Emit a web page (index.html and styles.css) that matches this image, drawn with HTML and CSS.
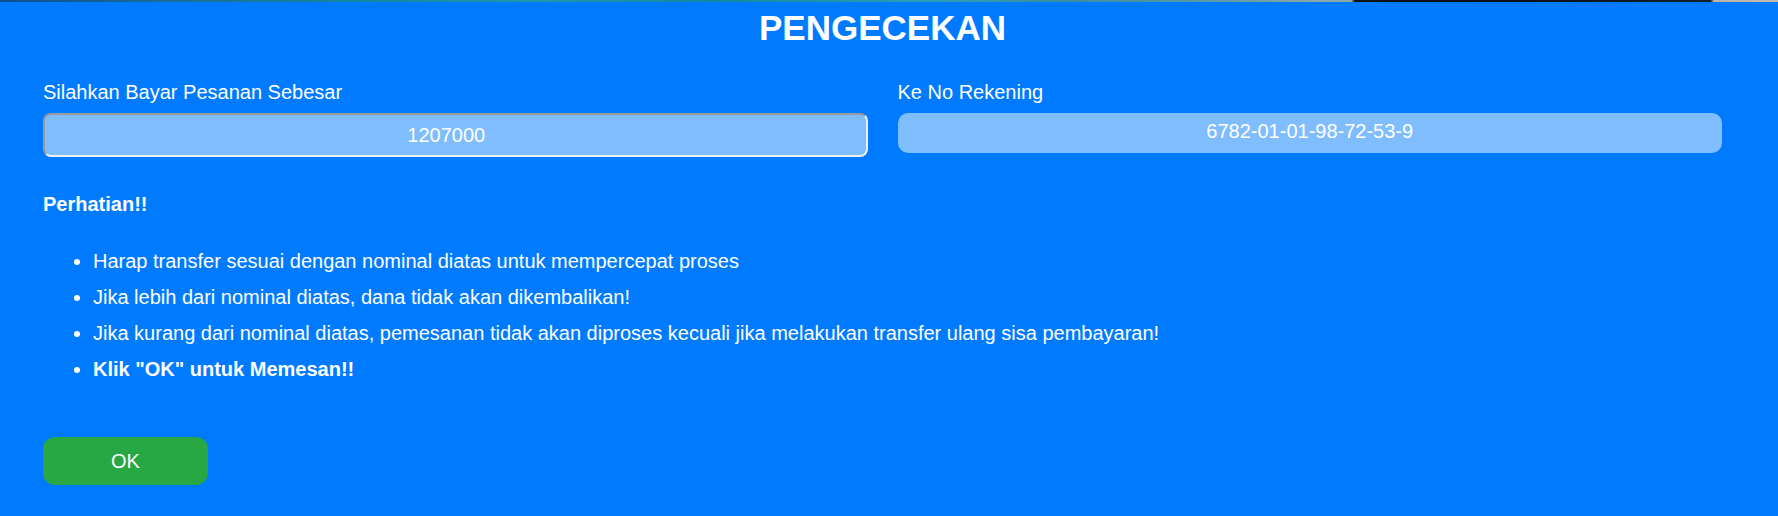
FILE: index.html
```html
<!DOCTYPE html>
<html lang="id">
<head>
<meta charset="utf-8">
<title>Pengecekan</title>
<link rel="stylesheet" href="styles.css">
</head>
<body>
<div class="strip"></div>
<main class="panel">
  <h1 class="title">PENGECEKAN</h1>
  <div class="fields">
    <div class="field">
      <label class="label" for="nominal">Silahkan Bayar Pesanan Sebesar</label>
      <input id="nominal" class="amount" type="text" value="1207000" readonly>
    </div>
    <div class="field">
      <label class="label" for="rekening">Ke No Rekening</label>
      <div id="rekening" class="account">6782-01-01-98-72-53-9</div>
    </div>
  </div>
  <p class="notice">Perhatian!!</p>
  <ul class="rules">
    <li>Harap transfer sesuai dengan nominal diatas untuk mempercepat proses</li>
    <li>Jika lebih dari nominal diatas, dana tidak akan dikembalikan!</li>
    <li>Jika kurang dari nominal diatas, pemesanan tidak akan diproses kecuali jika melakukan transfer ulang sisa pembayaran!</li>
    <li class="strong">Klik "OK" untuk Memesan!!</li>
  </ul>
  <button class="ok" type="button">OK</button>
</main>
</body>
</html>
```
FILE: styles.css
```css
html, body {
  margin: 0;
  padding: 0;
}
body {
  background: #007bff;
  color: #fff;
  font-family: "Liberation Sans", Arial, sans-serif;
  font-size: 20px;
  line-height: 30px;
  height: 516px;
  overflow: hidden;
}
.strip {
  height: 2px;
  background: linear-gradient(90deg, #0d4f86 0%, #1a6f9a 10%, #13869b 20%, #1d9aa8 30%, #1686a0 40%, #2a9fb0 52%, #3a8fa0 60%, #5a9aa6 68%, #8aa8aa 74%, #90a8a8 76%, #101214 76.2%, #0a1016 85%, #14202a 96.2%, #b8b4ac 96.4%, #c0bcb4 100%);
}
.panel {
  padding: 0 56px 0 43px;
}
.title {
  margin: 5px 0 0;
  font-size: 35px;
  line-height: 42px;
  font-weight: bold;
  text-align: center;
}
.fields {
  display: grid;
  grid-template-columns: 1fr 1fr;
  column-gap: 30px;
  margin-top: 28px;
}
.field {
  display: flex;
  flex-direction: column;
}
.label {
  display: block;
  margin-bottom: 6px;
}
.amount {
  box-sizing: border-box;
  width: 100%;
  height: 44px;
  margin: 0;
  padding: 0 24px 0 6px;
  font-family: "Liberation Sans", Arial, sans-serif;
  font-size: 20px;
  color: #fff;
  text-align: center;
  background: #80bdff;
  border: 2px solid;
  border-color: #9a9a9a #efefef #efefef #9a9a9a;
  border-radius: 8px;
  outline: none;
}
.account {
  box-sizing: border-box;
  height: 40px;
  padding: 3px 0 7px;
  background: #80bdff;
  border-radius: 10px;
  text-align: center;
}
.notice {
  margin: 32px 0 0;
  font-weight: bold;
}
.rules {
  margin: 27px 0 0;
  padding-left: 50px;
}
.rules li {
  margin-bottom: 6px;
}
.rules li.strong {
  font-weight: bold;
}
.ok {
  display: block;
  width: 165px;
  height: 48px;
  margin-top: 53px;
  padding: 0;
  border: none;
  border-radius: 12px;
  background: #28a745;
  color: #fff;
  font-family: "Liberation Sans", Arial, sans-serif;
  font-size: 20px;
}
```
